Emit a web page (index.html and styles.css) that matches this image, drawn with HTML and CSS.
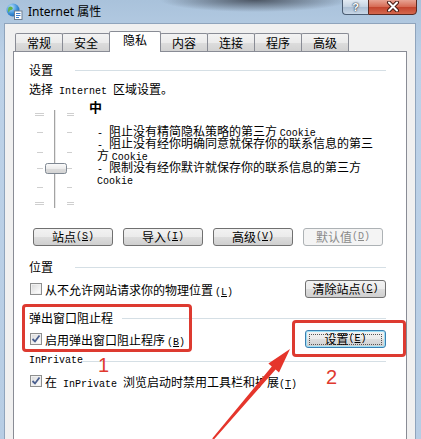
FILE: index.html
```html
<!DOCTYPE html>
<html lang="zh-CN">
<head>
    <meta charset="UTF-8">
    <meta name="viewport" content="width=device-width, initial-scale=1.0">
    <title>Internet 属性</title>
    <link rel="stylesheet" href="styles.css">
</head>
<body>
    <div class="titlebar">
        <div class="title">
            <svg class="app-icon" width="17" height="17" viewBox="0 0 17 17">
                <defs>
                    <radialGradient id="globe" cx="0.35" cy="0.3" r="0.8">
                        <stop offset="0" stop-color="#bfe3ff"/>
                        <stop offset="0.6" stop-color="#3b8fd8"/>
                        <stop offset="1" stop-color="#1d5fa8"/>
                    </radialGradient>
                </defs>
                <circle cx="7" cy="7" r="6.5" fill="url(#globe)"/>
                <path d="M2.5 4.5c1.5-1.5 3-1 4 0s-.5 2.5-1.5 2.5-2 1-2 2.5c-1 0-1.2-3-.5-5z" fill="#63b44c"/>
                <rect x="8.5" y="8" width="7.5" height="8.5" fill="#fff" stroke="#6d7f93"/>
                <path d="M10 10.5h4.5M10 12.5h4.5M10 14.5h3" stroke="#3d7cc9"/>
            </svg>
            <span>Internet 属性</span>
        </div>
        <div class="caption-buttons">
            <div class="cap-btn help">?</div>
            <div class="cap-btn close">
                <svg width="14" height="11" viewBox="0 0 14 11">
                    <path d="M3 1.5l8 8M11 1.5l-8 8" stroke="#4a1c14" stroke-width="4" stroke-linecap="round"/>
                    <path d="M3 1.5l8 8M11 1.5l-8 8" stroke="#fff" stroke-width="2" stroke-linecap="round"/>
                </svg>
            </div>
        </div>
    </div>

    <div class="client">
        <div class="tabs">
            <div class="tab">常规</div>
            <div class="tab">安全</div>
            <div class="tab active">隐私</div>
            <div class="tab">内容</div>
            <div class="tab">连接</div>
            <div class="tab">程序</div>
            <div class="tab">高级</div>
        </div>

        <div class="panel">
            <div class="group-head group-settings"><span>设置</span></div>
            <p class="intro">选择<span class="en"> Internet </span>区域设置。</p>

            <div class="privacy">
                <svg class="slider" width="42" height="110" viewBox="0 0 42 110">
                    <defs>
                        <linearGradient id="thumb" x1="0" y1="0" x2="0" y2="1">
                            <stop offset="0" stop-color="#fbfbfb"/>
                            <stop offset="0.5" stop-color="#ececec"/>
                            <stop offset="0.51" stop-color="#dcdcdc"/>
                            <stop offset="1" stop-color="#d2d2d2"/>
                        </linearGradient>
                    </defs>
                    <g stroke="#cfcfcf">
                        <path d="M2 13.5h9M34 13.5h7M2 15.5h9M34 15.5h7"/>
                        <path d="M4 32.5h6M34 32.5h5"/>
                        <path d="M4 52.5h6M34 52.5h5"/>
                        <path d="M4 68.5h6M34 68.5h5"/>
                        <path d="M4 87.5h6M34 87.5h5"/>
                        <path d="M2 102.5h9M34 102.5h7M2 104.5h9M34 104.5h7"/>
                    </g>
                    <path d="M21.5 10v98" stroke="#a3a3a3"/>
                    <path d="M22.5 10v98" stroke="#e8e8e8"/>
                    <rect x="12.5" y="63.5" width="21" height="10" rx="2" fill="url(#thumb)" stroke="#7f8893"/>
                </svg>
                <div class="level">
                    <div class="level-name">中</div>
                    <div class="level-desc">
                        <div><span class="en">- </span>阻止没有精简隐私策略的第三方 <span class="en">Cookie</span></div>
                        <div><span class="en">- </span>阻止没有经你明确同意就保存你的联系信息的第三</div>
                        <div>方 <span class="en">Cookie</span></div>
                        <div><span class="en">- </span>限制没有经你默许就保存你的联系信息的第三方</div>
                        <div><span class="en">Cookie</span></div>
                    </div>
                </div>
            </div>

            <div class="btn-row">
                <button class="btn">站点<span class="en">(<u>S</u>)</span></button>
                <button class="btn">导入<span class="en">(<u>I</u>)</span></button>
                <button class="btn">高级<span class="en">(<u>V</u>)</span></button>
                <button class="btn" disabled>默认值<span class="en">(<u>D</u>)</span></button>
            </div>

            <div class="group-head group-location"><span>位置</span></div>
            <div class="option option-location">
                <span class="check"></span>
                <span>从不允许网站请求你的物理位置<span class="en key">(<u>L</u>)</span></span>
                <button class="btn btn-side">清除站点<span class="en">(<u>C</u>)</span></button>
            </div>

            <div class="group-head group-popup"><span>弹出窗口阻止程</span></div>
            <div class="option option-popup">
                <span class="check checked">
                    <svg width="10" height="10" viewBox="0 0 10 10"><path d="M1.5 5l2.5 2.5 4.5-6" fill="none" stroke="#4a5f8f" stroke-width="1.8"/></svg>
                </span>
                <span>启用弹出窗口阻止程序<span class="en key">(<u>B</u>)</span></span>
                <button class="btn btn-side btn-default"><span class="focus">设置<span class="en">(<u>E</u>)</span></span></button>
            </div>

            <div class="group-head group-private"><span class="en">InPrivate</span></div>
            <div class="option option-private">
                <span class="check checked">
                    <svg width="10" height="10" viewBox="0 0 10 10"><path d="M1.5 5l2.5 2.5 4.5-6" fill="none" stroke="#4a5f8f" stroke-width="1.8"/></svg>
                </span>
                <span>在<span class="en"> InPrivate </span>浏览启动时禁用工具栏和扩展<span class="en">(<u>T</u>)</span></span>
            </div>
        </div>
    </div>

    <div class="mark mark-1"></div>
    <div class="mark mark-2"></div>
    <div class="step step-1">1</div>
    <div class="step step-2">2</div>
    <svg class="arrow" width="421" height="439" viewBox="0 0 421 439">
        <polygon points="290,349 279,372.5 275.6,369.6 213.8,439.6 212.2,438.4 271.8,366.4 268.4,363.5" fill="#e5352b"/>
    </svg>
</body>
</html>
```

FILE: styles.css
```css
* {
    box-sizing: border-box;
}
body {
    margin: 0;
    width: 421px;
    height: 439px;
    overflow: hidden;
    position: relative;
    font-family: "Noto Sans CJK SC", sans-serif;
    font-size: 12px;
    color: #000;
    background:
        radial-gradient(ellipse 95px 12px at 255px 0, rgba(45, 50, 60, 0.75), rgba(45, 50, 60, 0)),
        linear-gradient(#a9c2db, #bdd2e8 60px, #b7cde4);
}
.en {
    font-family: "Liberation Mono", monospace;
    font-size: 10px;
    line-height: 10px;
    white-space: pre;
}
u {
    text-decoration: underline;
}

/* title bar */
.titlebar {
    height: 23px;
    display: flex;
    justify-content: space-between;
    align-items: flex-start;
}
.title {
    display: flex;
    align-items: center;
    gap: 5px;
    height: 22px;
    padding-left: 6px;
    font-family: "Noto Sans", "Noto Sans CJK SC", sans-serif;
    font-size: 12px;
}
.caption-buttons {
    display: flex;
    margin-right: 4px;
    margin-top: -2px;
}
.cap-btn {
    height: 17px;
    display: flex;
    align-items: center;
    justify-content: center;
}
.help {
    width: 26px;
    border: 1px solid #4b5d73;
    border-right: none;
    border-radius: 0 0 0 4px;
    background: linear-gradient(#e6edf5, #c6d4e3 50%, #aabdd2 51%, #c8d7e7);
    color: #fff;
    font: bold 11px "Liberation Sans", sans-serif;
    text-shadow: 0 0 2px #1c2838, 0 0 1px #1c2838;
}
.close {
    width: 49px;
    border: 1px solid #5a2a22;
    border-radius: 0 0 4px 0;
    background: linear-gradient(#eaab9c, #d76d57 50%, #c2412b 51%, #d4684e);
}

/* dialog body */
.client {
    margin: 0 5px 0 4px;
    height: 430px;
    padding-top: 7px;
    background: #f0f0f0;
    border: 1px solid #8fa4bc;
}
.tabs {
    display: flex;
    align-items: flex-end;
    margin-left: 10px;
}
.tab {
    height: 18px;
    padding: 0 11px;
    line-height: 17px;
    border: 1px solid #898c95;
    border-bottom: none;
    border-radius: 2px 2px 0 0;
    background: linear-gradient(#f3f3f3, #ebebeb 50%, #dddddd 51%, #d2d2d2);
}
.tab + .tab {
    margin-left: -1px;
}
.tab.active {
    position: relative;
    height: 21px;
    padding: 0 13px;
    margin-bottom: -1px;
    line-height: 16px;
    background: #fff;
}
.panel {
    height: 400px;
    margin: 0 8px;
    padding: 0 20px 0 15px;
    background: #fff;
    border: 1px solid #898c95;
}

.group-head {
    display: flex;
    align-items: center;
    height: 14px;
    line-height: 14px;
}
.group-head::after {
    content: "";
    flex: 1;
    border-top: 1px solid #d5dfe5;
}
.group-head span {
    margin-right: 22px;
}
.group-settings {
    margin-top: 11px;
}
.group-location {
    margin-top: 14px;
}
.group-popup {
    margin-top: 13px;
}
.group-popup span {
    margin-right: 9px;
}
.group-private {
    margin-top: 6px;
}
.group-private span {
    margin-right: 0;
}

.intro {
    height: 14px;
    margin: 5px 0 0;
    line-height: 14px;
}
.privacy {
    display: flex;
    height: 110px;
    margin-top: 4px;
}
.slider {
    flex: none;
    margin-left: 4px;
}
.level {
    margin-left: 14px;
}
.level-name {
    height: 14px;
    font-weight: bold;
    font-size: 13px;
    line-height: 14px;
}
.level-desc {
    margin: 11px 0 0 8px;
    line-height: 12px;
    white-space: nowrap;
}
.level-desc div {
    height: 12px;
}

.btn-row {
    display: flex;
    gap: 10px;
    margin: 18px 0 0 4px;
}
.btn {
    display: flex;
    align-items: center;
    justify-content: center;
    width: 80px;
    height: 18px;
    padding: 0;
    font-family: "Noto Sans CJK SC", sans-serif;
    font-size: 12px;
    line-height: 14px;
    color: #000;
    border: 1px solid #707070;
    border-radius: 3px;
    background: linear-gradient(#f2f2f2, #ebebeb 50%, #dddddd 51%, #cfcfcf);
}
.btn:disabled {
    color: #8a8a8a;
    border-color: #adb2b5;
    background: #f4f4f4;
}
.btn-side {
    width: 81px;
    margin-left: auto;
}
.btn-default {
    border-color: #3c7fb1;
    box-shadow: inset 0 0 0 1px #9ee1f7;
}
.focus {
    display: flex;
    align-items: center;
    justify-content: center;
    width: calc(100% - 6px);
    height: calc(100% - 5px);
    border: 1px dotted #555;
}

.option {
    display: flex;
    align-items: center;
    height: 18px;
}
.option-location {
    margin-top: 6px;
}
.option-popup {
    margin-top: 5px;
}
.option-private {
    margin-top: 4px;
}
.check {
    flex: none;
    display: flex;
    align-items: center;
    justify-content: center;
    width: 12px;
    height: 12px;
    margin: 0 3px 0 1px;
    border: 1px solid #8e8f8f;
    background: linear-gradient(135deg, #d8d8d8, #f6f6f6 70%, #fff);
    box-shadow: inset 0 0 0 1px #f0f0f0;
}
.key {
    margin-left: 2px;
}

/* annotations drawn over the dialog */
.mark {
    position: absolute;
    border: 3px solid #dd3a30;
    border-radius: 4px;
}
.mark-1 {
    left: 22px;
    top: 304px;
    width: 170px;
    height: 48px;
}
.mark-2 {
    left: 292px;
    top: 320px;
    width: 114px;
    height: 37px;
}
.step {
    position: absolute;
    font-family: "Liberation Sans", sans-serif;
    font-size: 20px;
    line-height: 20px;
    color: #e0392e;
}
.step-1 {
    left: 98px;
    top: 355px;
}
.step-2 {
    left: 326px;
    top: 367px;
}
.arrow {
    position: absolute;
    left: 0;
    top: 0;
    pointer-events: none;
}
```
